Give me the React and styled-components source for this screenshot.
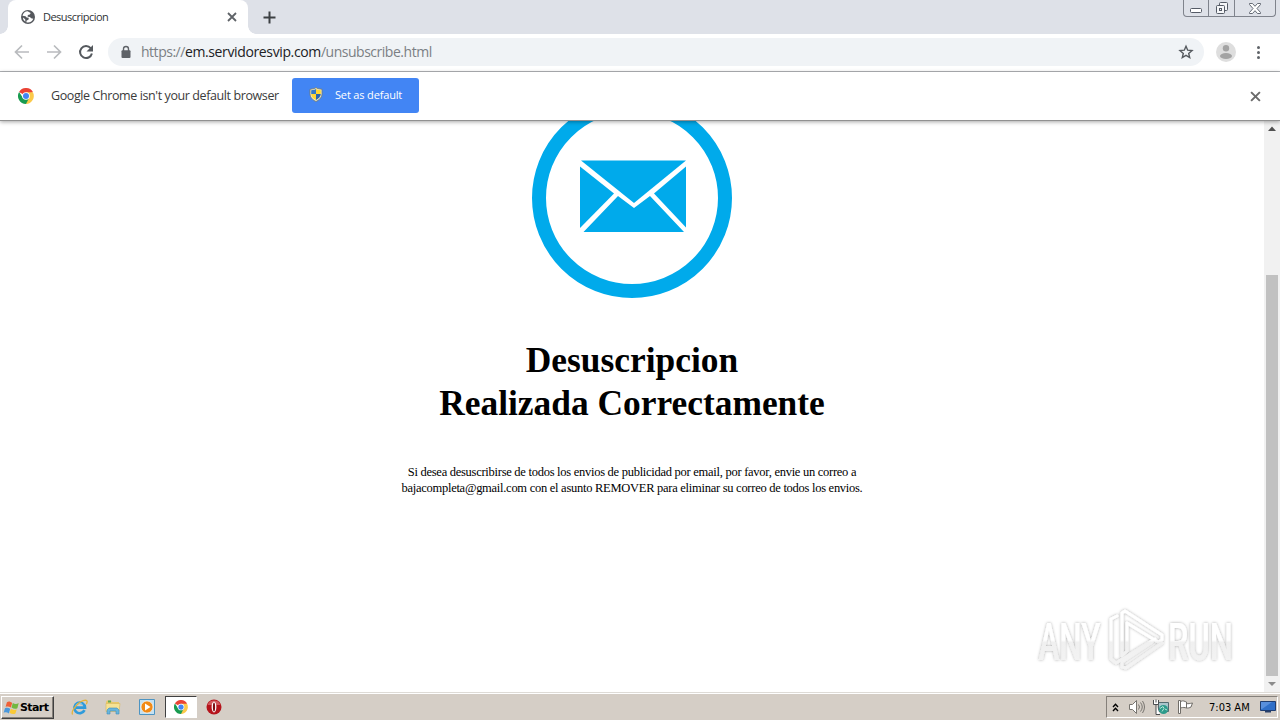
import React from 'react'
import styled, { createGlobalStyle, css } from 'styled-components'

const GlobalStyle = createGlobalStyle`
  * {
    box-sizing: border-box;
  }

  body {
    margin: 0;
    overflow: hidden;
    background: #fff;
  }

  svg {
    display: block;
    flex: none;
  }
`

const ui = '"DejaVu Sans Condensed", "DejaVu Sans", sans-serif'
const light = '"Open Sans", "Noto Sans", sans-serif'

const Root = styled.div`
  display: flex;
  flex-direction: column;
  width: 1280px;
  height: 720px;
  overflow: hidden;
  font-family: ${light};
  white-space: nowrap;
`

const TabStrip = styled.div`
  display: flex;
  justify-content: space-between;
  height: 34px;
  padding-left: 8px;
  background: #dee1e8;
`

const TabArea = styled.div`
  display: flex;
  align-items: center;
`

const Tab = styled.div`
  position: relative;
  display: flex;
  align-items: center;
  width: 240px;
  height: 34px;
  padding: 0 11px 0 13px;
  border-radius: 8px 8px 0 0;
  background: #fff;

  &::before,
  &::after {
    content: '';
    position: absolute;
    bottom: 0;
    width: 8px;
    height: 8px;
  }
  &::before {
    left: -8px;
    background: radial-gradient(circle at 0 0, transparent 7.5px, #fff 8px);
  }
  &::after {
    right: -8px;
    background: radial-gradient(circle at 100% 0, transparent 7.5px, #fff 8px);
  }
`

const TabTitle = styled.span`
  flex: 1;
  margin-left: 8px;
  padding-bottom: 1px;
  font-size: 11px;
  letter-spacing: -0.53px;
  color: #303336;
`

const NewTab = styled.div`
  margin-left: 15px;
`

const WindowButtons = styled.div`
  display: flex;
  width: 93px;
  height: 17px;
  margin-right: 4px;
  border: 1px solid #7f838c;
  border-top: 0;
  border-radius: 0 0 4px 4px;
`

const WindowButton = styled.div`
  display: flex;
  align-items: center;
  justify-content: center;
  width: ${({ $width }) => $width}px;

  & + & {
    border-left: 1px solid #7f838c;
  }
`

const Toolbar = styled.div`
  display: flex;
  align-items: center;
  height: 38px;
  padding: 0 14px 1px;
  border-bottom: 1px solid #b2b4b8;
  background: #fff;
`

const NavButtons = styled.div`
  display: flex;
  gap: 16px;
  margin-right: 14px;
`

const AddressBar = styled.div`
  display: flex;
  align-items: center;
  width: 1096px;
  height: 28px;
  padding: 0 10px 0 12px;
  border-radius: 14px;
  background: #f0f3f6;
`

const Url = styled.span`
  flex: 1;
  margin-left: 9px;
  padding-bottom: 1px;
  font-size: 14px;
  letter-spacing: -0.48px;
  color: #7b7f84;
`

const Host = styled.span`
  letter-spacing: -0.37px;
  color: #202124;
`

const Avatar = styled.div`
  margin-left: 12px;
`

const Dots = styled.div`
  display: flex;
  flex-direction: column;
  gap: 2px;
  margin-left: 21px;
`

const Dot = styled.i`
  width: 3px;
  height: 3px;
  border-radius: 50%;
  background: #5f6368;
`

const InfoBar = styled.div`
  position: relative;
  z-index: 1;
  display: flex;
  align-items: center;
  flex: none;
  height: 49px;
  padding: 0 19px 0 18px;
  border-bottom: 1px solid #919191;
  background: #fff;
  box-shadow: 0 1px 4px rgba(0, 0, 0, 0.35);
`

const InfoText = styled.span`
  width: 258px;
  padding: 0 0 2px 17px;
  font-size: 12.5px;
  letter-spacing: -0.4px;
  color: #3b3b3b;
`

const DefaultButton = styled.div`
  display: flex;
  align-items: center;
  width: 127px;
  height: 35px;
  margin: 0 auto 2px 0;
  padding: 0 0 1px 17px;
  gap: 12px;
  border-radius: 3px;
  background: #4285f4;
  font-size: 11px;
  letter-spacing: -0.16px;
  color: #fff;
`

const Viewport = styled.div`
  display: flex;
  flex: 1;
  min-height: 0;
`

const Page = styled.main`
  position: relative;
  display: flex;
  flex-direction: column;
  align-items: center;
  width: 1264px;
  font-family: 'Liberation Serif', 'Times New Roman', serif;
  text-align: center;
  color: #000;
`

const MailBadge = styled.div`
  height: 177px;
  margin-bottom: 41px;

  svg {
    margin-top: -23px;
  }
`

const Title = styled.h1`
  margin: 0 0 39px;
  font-size: 35.4px;
  line-height: 43px;
`

const Notice = styled.p`
  margin: 0;
  font-size: 12.5px;
  line-height: 16px;
  letter-spacing: -0.27px;
`

const Watermark = styled.div`
  position: absolute;
  left: 1030px;
  top: 484px;

  svg {
    overflow: visible;
  }
`

const Scrollbar = styled.div`
  display: flex;
  flex-direction: column;
  align-items: center;
  width: 16px;
  padding: 5px 0 6px;
  background: #f1f1f1;
`

const Thumb = styled.div`
  width: 12px;
  height: 401px;
  margin-top: auto;
  margin-bottom: 6px;
  background: #c1c1c1;
`

const Taskbar = styled.div`
  display: flex;
  align-items: center;
  height: 28px;
  padding: 1px 0 0 1px;
  border-top: 1px solid #dedbd6;
  box-shadow: inset 0 1px #fff;
  background: #d5cec6;
  font-family: ${ui};
  color: #000;
`

const raised = css`
  border: 1px solid;
  border-color: #fff #404040 #404040 #fff;
  box-shadow: inset -1px -1px #85807a;
`

const StartButton = styled.div`
  ${raised}
  display: flex;
  align-items: center;
  width: 53px;
  height: 23px;
  margin-right: 17px;
  padding-left: 1px;
  font-family: 'DejaVu Sans', sans-serif;
  font-size: 11px;
  font-weight: 700;
  letter-spacing: -0.6px;
`

const Launch = styled.div`
  display: flex;
  align-items: center;
  justify-content: center;
  width: ${({ $active }) => ($active ? 32 : 16)}px;
  height: 22px;
  margin-right: ${({ $gap }) => $gap}px;
  ${({ $active }) =>
    $active &&
    css`
      border: 1px solid;
      border-color: #404040 #fff #fff #404040;
      background: #fff;
    `}
`

const Tray = styled.div`
  display: flex;
  align-items: center;
  width: 172px;
  height: 22px;
  margin: 0 2px 0 auto;
  padding-left: 5px;
  border: 1px solid;
  border-color: #85807a #fff #fff #85807a;
`

const TrayIcon = styled.div`
  margin-right: ${({ $gap }) => $gap}px;
`

const Clock = styled.span`
  width: 51px;
  font-size: 11px;
`

const Cross = ({ color, size = 10 }) => (
  <svg width={size} height={size} viewBox="0 0 10 10" stroke={color} strokeWidth="1.8">
    <path d="M1 1l8 8M9 1l-8 8" />
  </svg>
)

const Globe = () => (
  <svg width="14" height="14" viewBox="0 0 14 14">
    <circle cx="7" cy="7" r="7" fill="#55585d" />
    <path
      d="M6.6 1.3C4 1.4 2 3 1.5 5.8l3 .5 1.1 1.1 2.1.4-.1 1.8-2.1 1.1-.1 1.5c3.1.8 6-.8 6.9-3.5l-2.1-.4-1.3-1.3-2.2-.2.1-1.7 2-.7.9-1.3z"
      fill="#fff"
    />
    <path d="M2 7.6l2.2 1.6.2 2.5C2.8 10.8 2 9.4 2 7.6z" fill="#fff" />
  </svg>
)

const ChromeLogo = ({ size }) => (
  <svg width={size} height={size} viewBox="0 0 48 48">
    <path d="M24 24L3.2 12A24 24 0 0 1 44.8 12z" fill="#ea4335" />
    <path d="M24 24L44.8 13A24 24 0 0 1 24 48z" fill="#fbc94a" />
    <path d="M24 24l9.5 5.5L24 48A24 24 0 0 1 3.2 12l11.3 17.5z" fill="#189b50" />
    <path d="M24 13h20.8L34 30z" fill="#fbc94a" />
    <circle cx="24" cy="24" r="11.5" fill="#fff" />
    <circle cx="24" cy="24" r="9" fill="#4285f4" />
  </svg>
)

const Shield = () => (
  <svg width="14" height="15" viewBox="0 0 14 15">
    <path d="M7 .5l1.5 1L13 2.3v4.5c0 3.5-2.5 6-6 7.7-3.5-1.7-6-4.2-6-7.7V2.3l4.5-.8z" fill="#ece8c9" stroke="#777a68" strokeWidth=".8" />
    <path d="M7 2v5H2.2V3.2l3.3-.5z" fill="#3479c8" />
    <path d="M7 2l1.5.7 3.3.5V7H7z" fill="#ffd633" />
    <path d="M2.2 7H7v6C4.2 11.6 2.4 9.5 2.2 7z" fill="#ffd633" />
    <path d="M7 7h4.8C11.6 9.5 9.8 11.6 7 13z" fill="#2b65b0" />
  </svg>
)

const Mail = () => (
  <svg width="200" height="200" viewBox="0 0 200 200">
    <circle cx="100" cy="100" r="93" fill="none" stroke="#00aaeb" strokeWidth="14" />
    <g fill="#00aaeb">
      <path d="M49 62.5h105l-52 42.5z" />
      <path d="M48 68.5l34 27-34 34.5z" />
      <path d="M154 68.5v61l-32-34z" />
      <path d="M51.5 134L86 98l16 12L118 98l34 36z" />
    </g>
  </svg>
)

const AnyRun = () => (
  <svg width="210" height="74" viewBox="1030 605 210 74">
    <defs>
      <filter id="soft" x="-10%" y="-20%" width="120%" height="140%">
        <feDropShadow dx="0" dy="0" stdDeviation="1.5" floodColor="#000" floodOpacity=".34" />
      </filter>
      <linearGradient id="fade" gradientUnits="userSpaceOnUse" x1="0" y1="610" x2="0" y2="670">
        <stop offset=".5" stopColor="#fff" />
        <stop offset=".54" stopColor="#f0f0f0" />
        <stop offset="1" stopColor="#f4f4f4" />
      </linearGradient>
    </defs>
    <g filter="url(#soft)" fill="url(#fade)" fontFamily="Roboto, sans-serif" fontSize="51" fontWeight="500">
      <text x="1038.5" y="660" textLength="62" lengthAdjust="spacingAndGlyphs">
        ANY
      </text>
      <text x="1168" y="660" textLength="65" lengthAdjust="spacingAndGlyphs">
        RUN
      </text>
    </g>
    <g filter="url(#soft)" fill="none" stroke="url(#fade)" strokeWidth="3" strokeLinejoin="round" strokeLinecap="round">
      <path d="M1122 656v-43l3-2 37 24v5l-4 2-31-19v28z" />
      <path d="M1117 616l-6 3v40l5 4 39-24" />
      <path d="M1162 643l-36 25-4-1v-5l30-20" />
    </g>
  </svg>
)

const WindowsFlag = () => (
  <svg width="17" height="17" viewBox="-2 -2 24 26">
    <path d="M3 3c3-2 5-1 8 1L9 11c-3-2-5-2-8-1z" fill="#ef6037" />
    <path d="M12 4c3 2 6 2 9 0l-2 8c-3 2-6 1-9-1z" fill="#72b840" />
    <path d="M0 12c3-1 5-1 8 1l-2 7c-3-2-5-2-8-1z" fill="#4a98dc" />
    <path d="M9 13c3 2 6 2 9 1l-2 6c-3 2-6 1-9-1z" fill="#f9c937" />
  </svg>
)

const Explorer = () => (
  <svg width="17" height="17" viewBox="0 0 17 17" fill="none">
    <path d="M13.5 11.2A5.3 5.3 0 1 1 14 8.7H5" stroke="#2f9bdb" strokeWidth="2.7" />
    <path d="M4.5 6.5C6 4 10 3.6 11.5 5.5" stroke="#9bd9f5" strokeWidth=".8" />
    <path d="M1.6 15.5C-.5 12 8 1.5 14.5 1.2c2 0 2 1.8.8 4" stroke="#e4b339" strokeWidth="1.3" />
  </svg>
)

const Folder = () => (
  <svg width="16" height="16" viewBox="0 0 16 16">
    <path d="M1 3l1-1.5h4L7 3h7v9H1z" fill="#e9c868" />
    <path d="M3 1.5h3v2H3z" fill="#63a853" />
    <path d="M1 4.5h14l-1 8H1z" fill="#f6e294" stroke="#d9b95c" strokeWidth=".6" />
    <path d="M2 15v-4l2-2h8l2 2v4h-3v-3H5v3z" fill="#69b5dc" stroke="#3e8ebd" strokeWidth=".6" />
  </svg>
)

const MediaPlayer = () => (
  <svg width="16" height="16" viewBox="0 0 16 16">
    <path d="M.5.5h15v15H.5z" fill="#c4e1f2" stroke="#4d94c2" />
    <circle cx="8" cy="8" r="6" fill="#f18a17" stroke="#fff" strokeWidth=".6" />
    <path d="M6 4.5L11.5 8 6 11.5z" fill="#fff" />
  </svg>
)

const Opera = () => (
  <svg width="16" height="16" viewBox="0 0 16 16">
    <circle cx="8" cy="8" r="7.5" fill="#b5141c" />
    <path d="M1.5 6A7 7 0 0 1 14.5 6z" fill="#d2585c" />
    <ellipse cx="8" cy="8" rx="2.4" ry="5.4" fill="#fff" />
    <ellipse cx="8" cy="8" rx="1.1" ry="4.6" fill="#7e0c12" />
  </svg>
)

const App = () => (
  <Root>
    <GlobalStyle />
    <TabStrip>
      <TabArea>
        <Tab>
          <Globe />
          <TabTitle>Desuscripcion</TabTitle>
          <Cross color="#5f6368" />
        </Tab>
        <NewTab>
          <svg width="13" height="13" viewBox="0 0 13 13" stroke="#3c4043" strokeWidth="2">
            <path d="M6.5.5v12M.5 6.5h12" />
          </svg>
        </NewTab>
      </TabArea>
      <WindowButtons>
        <WindowButton $width={24}>
          <svg width="12" height="16" viewBox="0 0 12 16">
            <rect x=".5" y="8.5" width="11" height="4" rx="1" fill="#fff" stroke="#555b66" />
          </svg>
        </WindowButton>
        <WindowButton $width={26}>
          <svg width="14" height="14" viewBox="0 0 14 14" fill="#f5f6f8" stroke="#555b66">
            <rect x="4.5" y="1.5" width="8" height="8" rx="1" />
            <rect x="1.5" y="4.5" width="8" height="8" rx="1" />
            <rect x="4.5" y="7.5" width="2" height="2" />
          </svg>
        </WindowButton>
        <WindowButton $width={41}>
          <svg width="12" height="11" viewBox="0 0 12 11">
            <path d="M.5.5h3L6 3.3 8.5.5h3v1L8 5.5l3.5 4v1h-3L6 7.7l-2.5 2.8h-3v-1L4 5.5.5 1.5z" fill="#fff" stroke="#555b66" strokeWidth=".9" />
          </svg>
        </WindowButton>
      </WindowButtons>
    </TabStrip>
    <Toolbar>
      <NavButtons>
        {[false, true].map((forward) => (
          <svg key={String(forward)} width="16" height="16" viewBox="0 0 16 16" fill="none" stroke="#b9bbbe" strokeWidth="1.7">
            <path d={forward ? 'M1 8h13M8 1.5L14.5 8 8 14.5' : 'M15 8H2M8 1.5L1.5 8 8 14.5'} />
          </svg>
        ))}
        <svg width="16" height="16" viewBox="0 0 16 16">
          <path d="M12.7 4.2A6 6 0 1 0 13.9 9.5" fill="none" stroke="#55595e" strokeWidth="2" />
          <path d="M15 1v6.5H8.5z" fill="#55595e" />
        </svg>
      </NavButtons>
      <AddressBar>
        <svg width="12" height="14" viewBox="0 0 12 14">
          <path d="M3.5 6V4a2.5 2.5 0 0 1 5 0v2" fill="none" stroke="#5f6368" strokeWidth="1.4" />
          <rect x="1.5" y="5.3" width="9" height="7.7" rx="1" fill="#5f6368" />
        </svg>
        <Url>
          https://<Host>em.servidoresvip.com</Host>/unsubscribe.html
        </Url>
        <svg width="16" height="16" viewBox="0 0 16 16">
          <path d="M8 2.2l1.7 4 4.3.4-3.3 2.8 1 4.2L8 11.4l-3.7 2.2 1-4.2L2 6.6l4.3-.4z" fill="none" stroke="#55595e" strokeWidth="1.4" />
        </svg>
      </AddressBar>
      <Avatar>
        <svg width="20" height="20" viewBox="0 0 20 20">
          <circle cx="10" cy="10" r="10" fill="#dedede" />
          <circle cx="10" cy="6.2" r="3.2" fill="#a3a3a3" />
          <ellipse cx="10" cy="14" rx="6" ry="3" fill="#a3a3a3" />
        </svg>
      </Avatar>
      <Dots>
        <Dot />
        <Dot />
        <Dot />
      </Dots>
    </Toolbar>
    <InfoBar>
      <ChromeLogo size={16} />
      <InfoText>Google Chrome isn't your default browser</InfoText>
      <DefaultButton>
        <Shield />
        <span>Set as default</span>
      </DefaultButton>
      <Cross color="#6b6b6b" size={11} />
    </InfoBar>
    <Viewport>
      <Page>
        <MailBadge>
          <Mail />
        </MailBadge>
        <Title>
          Desuscripcion
          <br />
          Realizada Correctamente
        </Title>
        <Notice>
          Si desea desuscribirse de todos los envios de publicidad por email, por favor, envie un correo a
          <br />
          bajacompleta@gmail.com con el asunto REMOVER para eliminar su correo de todos los envios.
        </Notice>
        <Watermark>
          <AnyRun />
        </Watermark>
      </Page>
      <Scrollbar>
        <svg width="8" height="5" viewBox="0 0 8 5">
          <path d="M0 5l4-4.5L8 5z" fill="#505050" />
        </svg>
        <Thumb />
        <svg width="8" height="4" viewBox="0 0 8 4">
          <path d="M0 0h8L4 4z" fill="#8b8b8b" />
        </svg>
      </Scrollbar>
    </Viewport>
    <Taskbar>
      <StartButton>
        <WindowsFlag />
        Start
      </StartButton>
      <Launch $gap={18}>
        <Explorer />
      </Launch>
      <Launch $gap={18}>
        <Folder />
      </Launch>
      <Launch $gap={10}>
        <MediaPlayer />
      </Launch>
      <Launch $active $gap={9}>
        <ChromeLogo size={14} />
      </Launch>
      <Launch $gap={0}>
        <Opera />
      </Launch>
      <Tray>
        <TrayIcon $gap={10}>
          <svg width="7" height="9" viewBox="0 0 7 9" fill="none" stroke="#000" strokeWidth="1.4">
            <path d="M1 4l2.5-2.7L6 4M1 8l2.5-2.7L6 8" />
          </svg>
        </TrayIcon>
        <TrayIcon $gap={8}>
          <svg width="16" height="16" viewBox="0 0 16 16" fill="none" stroke="#77746f">
            <path d="M.5 5.5h3l4-4v13l-4-4h-3z" fill="#fff" />
            <path d="M9.5 5.5q2 2.5 0 5M11.5 3.5q3.5 4.5 0 9M13.5 2q4 6 0 12" />
          </svg>
        </TrayIcon>
        <TrayIcon $gap={8}>
          <svg width="16" height="16" viewBox="0 0 16 16">
            <path d="M5.5 3.5h10v9h-10z" fill="#a9c5cb" stroke="#536b70" />
            <path d="M.5 1v4.5h5V1M3 .5v3M3 5.5v10h4" fill="#fff" stroke="#4b4e50" />
            <circle cx="10.5" cy="10.5" r="4.5" fill="#2c9b8b" />
            <path d="M7 9.5l3-2 1 2-2 3M12 10l2 1" stroke="#b9e6d6" fill="none" />
          </svg>
        </TrayIcon>
        <TrayIcon $gap={15}>
          <svg width="17" height="16" viewBox="0 0 17 16" fill="#fff" stroke="#706d68">
            <path d="M1.5 1.5h2v13h-2zM3.5 2.5c3-1.5 4 0 6 .5v6c-2-.5-3-1-6 0zM9.5 4.5c2 .5 3 0 6-.5l-1.5 4c-1.5 1-3 1-4.5 1z" />
          </svg>
        </TrayIcon>
        <Clock>7:03 AM</Clock>
        <svg width="16" height="14" viewBox="0 0 16 14">
          <path d="M.5 1.5h15v9H.5z" fill="#2f6fc8" stroke="#1f3d70" />
          <path d="M1 2h11L2 9H1z" fill="#588fdc" />
          <path d="M5 11h6v1.5H5z" fill="#293f68" />
        </svg>
      </Tray>
    </Taskbar>
  </Root>
)

export default App
